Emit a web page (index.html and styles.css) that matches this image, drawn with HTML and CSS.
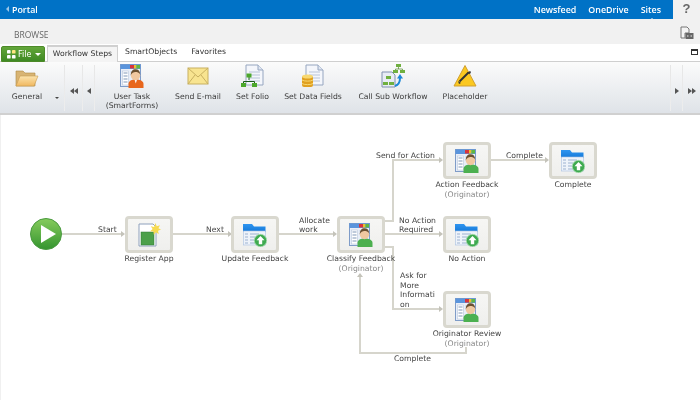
FILE: index.html
```html
<!DOCTYPE html>
<html lang="en">
<head>
<meta charset="utf-8">
<title>Portal</title>
<link rel="stylesheet" href="styles.css">
</head>
<body>
<svg class="defs" width="0" height="0" aria-hidden="true">
  <defs>
    <linearGradient id="folderFill" x1="0" y1="0" x2="0" y2="1"><stop offset="0" stop-color="#fbe3ad"/><stop offset="1" stop-color="#f0b860"/></linearGradient>
    <linearGradient id="blueFill" x1="0" y1="0" x2="0" y2="1"><stop offset="0" stop-color="#2f95f0"/><stop offset="1" stop-color="#1478d8"/></linearGradient>
    <symbol id="i-form" viewBox="0 0 24 24">
      <rect x="0.500" y="0.500" width="20" height="22" fill="#e8eef8" stroke="#7f9cc8"/>
      <rect x="0.500" y="0.500" width="20" height="4.500" fill="#5a94dc"/>
      <rect x="10" y="1" width="4" height="3.500" fill="#d8343c"/>
      <rect x="14" y="1" width="2.500" height="3.500" fill="#e8c030"/>
      <rect x="16.500" y="1" width="3.500" height="3.500" fill="#60b840"/>
      <rect x="2.500" y="7" width="6" height="14" fill="#fff" stroke="#b8c6dc" stroke-width=".6"/>
      <path d="M3.500 9h4M3.500 12h4M3.500 15h4M3.500 18h4" stroke="#8098b8" stroke-width="1.200"/>
      <path d="M10 8h9M10 11h3" stroke="#c8d4e6"/>
    </symbol>
    <symbol id="i-user-green" viewBox="0 0 24 24">
      <use href="#i-form"/>
      <path d="M8.500 24v-4c0-3 3-4 5-4.500h4.500c2 .5 5.500 1.500 5.500 4.500v4z" fill="#4cb050"/>
      <circle cx="15.500" cy="11.500" r="4.700" fill="#f0c8a0"/>
      <path d="M10.800 11c0-4 2-5.800 4.700-5.800s4.700 1.800 4.700 5.300c-1-2-3-2.500-5-2.500-1.500 0-3.400 1-4.400 3z" fill="#6a5030"/>
    </symbol>
    <symbol id="i-user-orange" viewBox="0 0 24 24">
      <use href="#i-form"/>
      <path d="M8.500 24v-4c0-3 3-4 5-4.500h4.500c2 .5 5.500 1.500 5.500 4.500v4z" fill="#e8661c"/>
      <path d="M14.500 15.500h2.500l-1.200 4z" fill="#fff"/>
      <circle cx="15.500" cy="11.500" r="4.700" fill="#f0c8a0"/>
      <path d="M10.800 11c0-4 2-5.800 4.700-5.800s4.700 1.800 4.700 5.300c-1-2-3-2.500-5-2.500-1.500 0-3.400 1-4.400 3z" fill="#6a5030"/>
    </symbol>
    <symbol id="i-folder-up" viewBox="0 0 24 24">
      <path d="M0 1h9l2 2.500h11.500V9H0z" fill="url(#blueFill)"/>
      <rect x="0.300" y="8" width="22" height="14" fill="#eef3fa" stroke="#a8c0e0" stroke-width=".6"/>
      <path d="M2 11h3M7 11h9M2 14h3M7 14h5M2 17h3M7 17h5M2 20h3M7 20h5" stroke="#9db2d0"/>
      <circle cx="17.500" cy="17.500" r="6.200" fill="#3eaa50" stroke="#a8dcae" stroke-width=".8"/>
      <path d="M17.500 13l4 4.200h-2.300v4h-3.400v-4h-2.300z" fill="#fff"/>
    </symbol>
    <symbol id="i-register" viewBox="0 0 24 24">
      <path d="M2 1h14l3 3v19H2z" fill="#fff" stroke="#8ea0bc"/>
      <rect x="4" y="9" width="13" height="13" fill="#4ca04a" stroke="#2f7a34" stroke-width=".5"/>
      <path d="M18.500 0l1.200 3.200 3.300-1-1.600 3 2.600 1.300-3 1.200.8 3.300-3-1.700-2 2.500-.4-3.400-3.300-.2 2.500-2.100-1.800-2.900 3.300.7z" fill="#f6da50"/>
    </symbol>
    <symbol id="i-page" viewBox="0 0 24 24">
      <path d="M5 1h12l5 5v15H5z" fill="#f4f6fb" stroke="#96a6c0"/>
      <path d="M17 1v5h5" fill="#dfe6f2" stroke="#96a6c0"/>
      <path d="M8 8h11M8 11h11M8 14h11M8 17h11" stroke="#b8c4d8"/>
    </symbol>
  </defs>
</svg>

<header class="topbar">
  <div class="suite">
    <div class="suite-left"><span class="back"></span><span>Portal</span></div>
    <nav class="suite-links">
      <span>Newsfeed</span><span>OneDrive</span><span class="current">Sites</span>
    </nav>
  </div>
  <div class="help">?</div>
</header>

<div class="browse-row">
  <span class="browse">BROWSE</span>
  <svg class="share" viewBox="0 0 14 14"><path d="M1 1h6l2 2v4H5v5H1z" fill="#f4f4f4" stroke="#777"/><rect x="5.500" y="7" width="8" height="6" fill="#666"/><path d="M7 10h1.500M10.500 10h1.500" stroke="#eee"/></svg>
</div>

<div class="tab-row">
  <div class="file-btn">
    <svg class="file-dots" viewBox="0 0 10 10"><rect width="4" height="4" rx="1" fill="#fff"/><rect x="5.500" width="4" height="4" rx="1" fill="#ffe680"/><rect y="5.500" width="4" height="4" rx="1" fill="#fff"/><rect x="5.500" y="5.500" width="4" height="4" rx="1" fill="#fff"/></svg>
    <span>File</span><span class="file-caret"></span>
  </div>
  <div class="tab active">Workflow Steps</div>
  <div class="tab t-smart">SmartObjects</div>
  <div class="tab t-fav">Favorites</div>
  <span class="min-box"></span>
</div>

<div class="ribbon">
  <div class="rb general">
    <svg class="ic" viewBox="0 0 24 24"><path d="M1 20V5h7l2 2h10v13z" fill="#d8b474" stroke="#b08a44" stroke-width=".6"/><path d="M1 20l4-10h18l-4 10z" fill="url(#folderFill)" stroke="#c89a50" stroke-width=".6"/></svg>
    <span>General</span>
  </div>
  <span class="caret-down"></span>
  <span class="sep"></span>
  <span class="nav-btn">
    <svg viewBox="0 0 8 6"><path d="M4 0v6L0 3zM8 0v6L4 3z" fill="#555"/></svg>
  </span>
  <span class="sep"></span>
  <span class="nav-btn single">
    <svg viewBox="0 0 4 6"><path d="M4 0v6L0 3z" fill="#555"/></svg>
  </span>
  <span class="sep"></span>
  <div class="rb w-user">
    <svg class="ic"><use href="#i-user-orange"/></svg>
    <span>User Task<br>(SmartForms)</span>
  </div>
  <div class="rb w-mail">
    <svg class="ic" viewBox="0 0 24 24"><rect x="2" y="4" width="20" height="16" fill="#f8e490" stroke="#c8b060"/><path d="M2 4l10 9 10-9M2 20l7-9M22 20l-7-9" fill="none" stroke="#c8b060"/></svg>
    <span>Send E-mail</span>
  </div>
  <div class="rb w-folio">
    <svg class="ic" viewBox="0 0 24 24"><use href="#i-page"/><path d="M8 12v4M2.500 20v-2.500h11V20" fill="none" stroke="#1a5a1a"/><rect x="5.500" y="9.500" width="5" height="4" fill="#4ca82c"/><rect x="0" y="19" width="5" height="4" fill="#4ca82c"/><rect x="11" y="19" width="5" height="4" fill="#4ca82c"/></svg>
    <span>Set Folio</span>
  </div>
  <div class="rb w-data">
    <svg class="ic" viewBox="0 0 24 24"><use href="#i-page"/><rect x="1" y="12" width="11" height="11" rx="2" fill="#e0a020"/><ellipse cx="6.500" cy="12.500" rx="5.500" ry="2" fill="#f8d870"/><path d="M1 16c2 1.500 9 1.500 11 0M1 19.500c2 1.500 9 1.500 11 0" fill="none" stroke="#f8d870"/></svg>
    <span>Set Data Fields</span>
  </div>
  <div class="rb w-sub">
    <svg class="ic" viewBox="0 0 24 24"><path d="M1 8h10l3 3v12H1z" fill="#e8ecf6" stroke="#8090b0"/><g fill="#70b040"><rect x="5" y="12" width="5" height="3"/><rect x="2" y="18" width="5" height="3"/><rect x="8" y="18" width="5" height="3"/><rect x="15" y="0" width="5" height="3"/><rect x="12" y="6" width="5" height="3"/><rect x="19" y="6" width="5" height="3"/></g><path d="M17.500 3v2M14.500 6V5h7v1" fill="none" stroke="#568a30" stroke-width=".7"/><path d="M14 22c3-1 5-3 5-8" fill="none" stroke="#1c88d8" stroke-width="2"/><path d="M19 10l3 4.500h-6z" fill="#1c88d8"/></svg>
    <span>Call Sub Workflow</span>
  </div>
  <div class="rb w-place">
    <svg class="ic" viewBox="0 0 24 24"><path d="M12 1.500L23 22H1z" fill="#fbc820" stroke="#d0a030" stroke-linejoin="round"/><path d="M15.500 8.500l-9 9" stroke="#333" stroke-width="2"/><path d="M14 9l3-2 1 1-1 2zM5 17l3 2-2 1z" fill="#333"/></svg>
    <span>Placeholder</span>
  </div>
  <span class="rb-spring"></span>
  <span class="sep"></span>
  <span class="nav-btn right single">
    <svg viewBox="0 0 4 6"><path d="M0 0v6l4-3z" fill="#555"/></svg>
  </span>
  <span class="sep"></span>
  <span class="nav-btn right">
    <svg viewBox="0 0 8 6"><path d="M0 0v6l4-3zM4 0v6l4-3z" fill="#555"/></svg>
  </span>
</div>

<main class="canvas">
  <svg class="wires" viewBox="0 115 700 285">
    <g fill="none" stroke="#d6d5cc" stroke-width="2">
      <path d="M62 234H122"/>
      <path d="M173 234H229"/>
      <path d="M279 234H335"/>
      <path d="M385 221H393V160H441"/>
      <path d="M385 234H441"/>
      <path d="M385 247H393V309H441"/>
      <path d="M491 160H547"/>
      <path d="M466 347V353H360V276"/>
    </g>
    <g fill="#c4c3ba">
      <path d="M125 234l-4-3v6z"/>
      <path d="M232 234l-4-3v6z"/>
      <path d="M337 234l-4-3v6z"/>
      <path d="M443 160l-4-3v6z"/>
      <path d="M443 234l-4-3v6z"/>
      <path d="M443 309l-4-3v6z"/>
      <path d="M549 160l-4-3v6z"/>
      <path d="M360 273l-3 4h6z"/>
    </g>
  </svg>

  <svg class="start" viewBox="0 0 34 34"><defs><linearGradient id="startFill" x1="0" y1="0" x2="0" y2="1"><stop offset="0" stop-color="#86cc5c"/><stop offset="1" stop-color="#34942f"/></linearGradient></defs><circle cx="17" cy="17" r="15.500" fill="url(#startFill)" stroke="#4a9a40"/><path d="M12 8l15 9-15 9z" fill="#fff"/></svg>

  <div class="node n-register"><div class="box"><svg class="ni"><use href="#i-register"/></svg></div><div class="cap">Register App</div></div>
  <div class="node n-update"><div class="box"><svg class="ni"><use href="#i-folder-up"/></svg></div><div class="cap">Update Feedback</div></div>
  <div class="node n-classify"><div class="box"><svg class="ni"><use href="#i-user-green"/></svg></div><div class="cap">Classify Feedback</div><div class="sub">(Originator)</div></div>
  <div class="node n-action"><div class="box"><svg class="ni"><use href="#i-user-green"/></svg></div><div class="cap">Action Feedback</div><div class="sub">(Originator)</div></div>
  <div class="node n-complete"><div class="box"><svg class="ni"><use href="#i-folder-up"/></svg></div><div class="cap">Complete</div></div>
  <div class="node n-noaction"><div class="box"><svg class="ni"><use href="#i-folder-up"/></svg></div><div class="cap">No Action</div></div>
  <div class="node n-review"><div class="box"><svg class="ni"><use href="#i-user-green"/></svg></div><div class="cap">Originator Review</div><div class="sub">(Originator)</div></div>

  <div class="edge e-start">Start</div>
  <div class="edge e-next">Next</div>
  <div class="edge e-allocate">Allocate<br>work</div>
  <div class="edge e-send">Send for Action</div>
  <div class="edge e-complete">Complete</div>
  <div class="edge e-noaction">No Action<br>Required</div>
  <div class="edge e-ask">Ask for<br>More<br>Informati<br>on</div>
  <div class="edge e-back">Complete</div>
</main>
</body>
</html>
```

FILE: styles.css
```css
* { box-sizing: border-box; }
html, body { margin: 0; padding: 0; }
body {
  width: 700px;
  height: 400px;
  overflow: hidden;
  background: #fff;
  font-family: "DejaVu Sans", Verdana, sans-serif;
  font-size: 7.7px;
  color: #444;
  filter: blur(0.25px);
}
.defs { position: absolute; }

/* top bar */
.topbar { display: flex; height: 20px; background: #f1f1f1; }
.suite {
  width: 673px;
  height: 19px;
  background: #0072c6;
  color: #fff;
  font-family: "Open Sans", sans-serif;
  font-size: 8.9px;
  font-weight: 600;
  display: flex;
  align-items: center;
  justify-content: space-between;
  padding: 0 12px 1px 6px;
}
.suite-left { display: flex; align-items: center; gap: 3px; }
.back { width: 0; height: 0; border: 3px solid transparent; border-right-color: #9cc6e8; border-left-width: 0; }
.suite-links { display: flex; gap: 12px; position: relative; }
.current::after {
  content: "";
  position: absolute;
  right: 6px;
  bottom: -5px;
  border: 3px solid transparent;
  border-top-width: 0;
  border-bottom-color: #f1f1f1;
}
.help {
  flex: 1;
  text-align: center;
  font-family: "Liberation Sans", sans-serif;
  font-weight: bold;
  font-size: 13px;
  line-height: 18px;
  color: #666;
}

.browse-row {
  height: 24px;
  background: #f1f1f1;
  display: flex;
  align-items: center;
  justify-content: space-between;
  padding: 4px 6px 0 14px;
}
.browse { font-family: "Open Sans", sans-serif; font-size: 8.5px; color: #666; }
.share { width: 14px; height: 14px; margin-top: -2px; }

/* tabs */
.tab-row {
  height: 18px;
  background: #fff;
  display: flex;
  align-items: flex-end;
  padding-left: 1px;
  border-bottom: 1px solid #cfcfcf;
  position: relative;
}
.file-btn {
  width: 44px;
  height: 16px;
  margin-bottom: -1px;
  display: flex;
  align-items: center;
  gap: 2px;
  padding-left: 5px;
  color: #fff;
  font-size: 8px;
  border: 1px solid #4d8a28;
  border-radius: 2px 2px 0 0;
  background: linear-gradient(#63a63a, #3f8a24);
}
.file-dots { width: 9px; height: 9px; }
.file-caret { width: 0; height: 0; margin-left: 2px; border: 3px solid transparent; border-top-color: #fff; border-bottom-width: 0; }
.tab {
  height: 17px;
  line-height: 16px;
  color: #333;
  white-space: nowrap;
}
.tab.active {
  width: 71px;
  margin: 0 0 -1px 2px;
  background: #f4f4f4;
  border: 1px solid #d0d0d0;
  border-bottom: 0;
  border-top-width: 2px;
  line-height: 14px;
  text-align: center;
}
.t-smart { margin-left: 7px; }
.t-fav { margin-left: 14px; }
.min-box {
  position: absolute;
  right: 2px;
  top: 5px;
  width: 7px;
  height: 6px;
  border: 1px solid #333;
  border-top-width: 2px;
}

/* ribbon */
.ribbon {
  height: 53px;
  display: flex;
  align-items: flex-start;
  background: linear-gradient(#fbfbfb, #dfe3e8);
  border-bottom: 2px solid #d0d0d0;
  line-height: 8.5px;
  text-align: center;
  color: #3c3c3c;
  padding-top: 2px;
}
.rb { display: flex; flex-direction: column; align-items: center; flex: none; white-space: nowrap; }
.ic { width: 24px; height: 24px; margin-bottom: 5px; display: block; }
.general { width: 44px; margin-left: 5px; padding-top: 2px; }
.general .ic { margin-bottom: 3px; }
.caret-down { width: 0; height: 0; margin: 33px 0 0 6px; border: 2px solid transparent; border-top-color: #444; border-bottom-width: 0; }
.sep { width: 1px; height: 46px; flex: none; background: linear-gradient(#e6e6e6, #eee); margin-top: 1px; }
.caret-down + .sep { margin-left: 5px; }
.nav-btn { width: 17px; flex: none; display: flex; justify-content: center; padding-top: 24px; }
.nav-btn.single { width: 11px; }
.nav-btn svg { height: 6px; width: 8px; }
.nav-btn.single svg { width: 4px; }
.w-user { width: 68px; margin-left: 3px; }
.w-mail { width: 64px; }
.w-folio { width: 45px; }
.w-data { width: 76px; }
.w-sub { width: 84px; }
.w-place { width: 60px; }
.rb-spring { flex: 1; }

/* canvas */
.canvas { position: relative; height: 285px; background: #fff; border-left: 1px solid #f0f0f0; }
.wires { position: absolute; left: -1px; top: 0; width: 700px; height: 285px; }
.start { position: absolute; left: 28px; top: 102px; width: 34px; height: 34px; }

.node { position: absolute; width: 100px; display: flex; flex-direction: column; align-items: center; line-height: 9px; white-space: nowrap; }
.box {
  width: 48px;
  height: 37px;
  display: flex;
  align-items: center;
  justify-content: center;
  background: linear-gradient(#f6f6f4, #efefed);
  border: 3px solid #d9d8cf;
  border-radius: 4px;
}
.ni { width: 24px; height: 24px; display: block; }
.cap { margin-top: 1px; color: #444; }
.sub { color: #888; margin-top: 1px; }

.n-register { left: 98px; top: 101px; }
.n-update { left: 204px; top: 101px; }
.n-classify { left: 310px; top: 101px; }
.n-action { left: 416px; top: 27px; }
.n-complete { left: 522px; top: 27px; }
.n-noaction { left: 416px; top: 101px; }
.n-review { left: 416px; top: 176px; }

.edge { position: absolute; line-height: 9px; white-space: nowrap; color: #444; }
.e-start { left: 97px; top: 110px; }
.e-next { left: 205px; top: 110px; }
.e-allocate { left: 298px; top: 101px; }
.e-send { left: 375px; top: 36px; }
.e-complete { left: 505px; top: 36px; }
.e-noaction { left: 398px; top: 101px; }
.e-ask { left: 399px; top: 156px; line-height: 9.500px; }
.e-back { left: 393px; top: 239px; }
```
